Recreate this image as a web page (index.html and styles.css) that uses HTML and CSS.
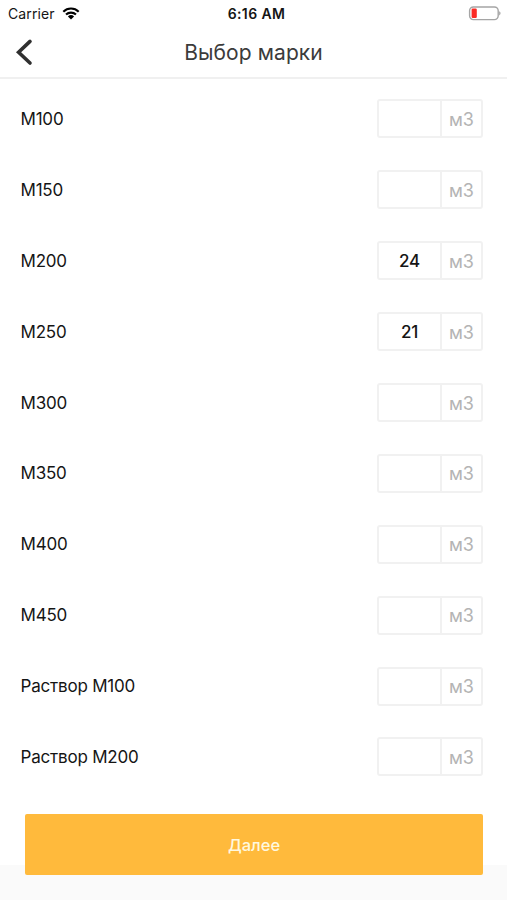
FILE: index.html
```html
<!DOCTYPE html>
<html lang="ru">
<head>
<meta charset="utf-8">
<title>Выбор марки</title>
<link rel="stylesheet" href="styles.css">
</head>
<body>
<div class="status">
  <div class="carrier"><span>Carrier</span>
    <svg class="wifi" viewBox="0 0 18 13" width="18" height="13"><path d="M1.3 4.7a11 11 0 0 1 15.4 0M4 7.6a7.2 7.2 0 0 1 10 0" fill="none" stroke="#000" stroke-width="2.1"/><path d="M5.9 9.4a4.5 4.5 0 0 1 6.2 0L9 12.6z"/></svg>
  </div>
  <div class="time">6:16 AM</div>
  <svg class="battery" viewBox="0 0 33 15" width="33" height="15"><rect x="1.6" y="1" width="28.6" height="12.6" rx="3.8" fill="#fff" stroke="#a5a5a5" stroke-width="1.4"/><rect x="3.6" y="2.6" width="5.2" height="9.4" rx="1.2" fill="#fb2b25"/><path d="M31.2 5.2c1.8.7 1.8 3.5 0 4.2z" fill="#a0a0a0"/></svg>
</div>
<header class="nav">
  <svg class="back" viewBox="0 0 20 28" width="20" height="28"><path d="M15 3.4 3.6 14.2 15 25" fill="none" stroke="#303030" stroke-width="3.6" stroke-linecap="round"/></svg>
  <h1 class="title">Выбор марки</h1>
</header>
<main class="list">
  <div class="row"><span class="name">M100</span><div class="field"><span class="value"></span><span class="unit">м3</span></div></div>
  <div class="row"><span class="name">M150</span><div class="field"><span class="value"></span><span class="unit">м3</span></div></div>
  <div class="row"><span class="name">M200</span><div class="field"><span class="value">24</span><span class="unit">м3</span></div></div>
  <div class="row"><span class="name">M250</span><div class="field"><span class="value">21</span><span class="unit">м3</span></div></div>
  <div class="row"><span class="name">M300</span><div class="field"><span class="value"></span><span class="unit">м3</span></div></div>
  <div class="row"><span class="name">M350</span><div class="field"><span class="value"></span><span class="unit">м3</span></div></div>
  <div class="row"><span class="name">M400</span><div class="field"><span class="value"></span><span class="unit">м3</span></div></div>
  <div class="row"><span class="name">M450</span><div class="field"><span class="value"></span><span class="unit">м3</span></div></div>
  <div class="row"><span class="name">Раствор M100</span><div class="field"><span class="value"></span><span class="unit">м3</span></div></div>
  <div class="row"><span class="name">Раствор M200</span><div class="field"><span class="value"></span><span class="unit">м3</span></div></div>
</main>
<footer class="footer"><button class="next">Далее</button></footer>
</body>
</html>
```
FILE: styles.css
```css
* { box-sizing: border-box; }
body {
  margin: 0;
  height: 900px;
  display: flex;
  flex-direction: column;
  overflow: hidden;
  background: #fff;
  color: #151515;
  font-family: Inter, "Liberation Sans", sans-serif;
}
.status {
  height: 27px;
  flex: none;
  display: grid;
  grid-template-columns: 1fr auto 1fr;
  align-items: center;
  padding: 0 6px 0 8px;
  font-size: 14px;
}
.carrier { display: flex; align-items: center; gap: 7px; letter-spacing: .1px; }
.wifi { display: block; }
.time { font-weight: 600; letter-spacing: .4px; margin-left: 4px; }
.battery { justify-self: end; }
.nav {
  height: 52px;
  flex: none;
  display: grid;
  grid-template-columns: 60px 1fr 60px;
  align-items: center;
  border-bottom: 2px solid #f0f0f0;
}
.back { margin-left: 15px; }
.title { margin: 0; text-align: center; font-size: 21px; font-weight: 400; letter-spacing: .1px; color: #3b3b3b; }
.list { flex: none; padding-top: 4.5px; }
.row {
  height: 70.9px;
  display: flex;
  align-items: center;
  justify-content: space-between;
  padding: 0 24px 0 20.5px;
}
.name { font-size: 17px; letter-spacing: -.2px; }
.field {
  width: 106px;
  height: 39px;
  display: flex;
  border: 2px solid #f1f1f1;
  border-radius: 3px;
  background: #fff;
}
.value, .unit { display: flex; align-items: center; justify-content: center; }
.value { width: 63px; border-right: 2px solid #f1f1f1; font-size: 17px; font-weight: 500; letter-spacing: -.3px; }
.unit { flex: 1; padding-top: 1px; font-size: 18px; color: #b4b4b4; }
.footer {
  flex: 1;
  padding: 21.5px 24px 24px 25px;
  background: linear-gradient(#fff 73px, #fafafa 73px);
}
.next {
  display: block;
  width: 100%;
  height: 61px;
  padding: 2px 0 0;
  border: 0;
  border-radius: 2px;
  background: #ffba3c;
  color: #fff8df;
  font: 500 16.5px Inter, "Liberation Sans", sans-serif;
}
```
